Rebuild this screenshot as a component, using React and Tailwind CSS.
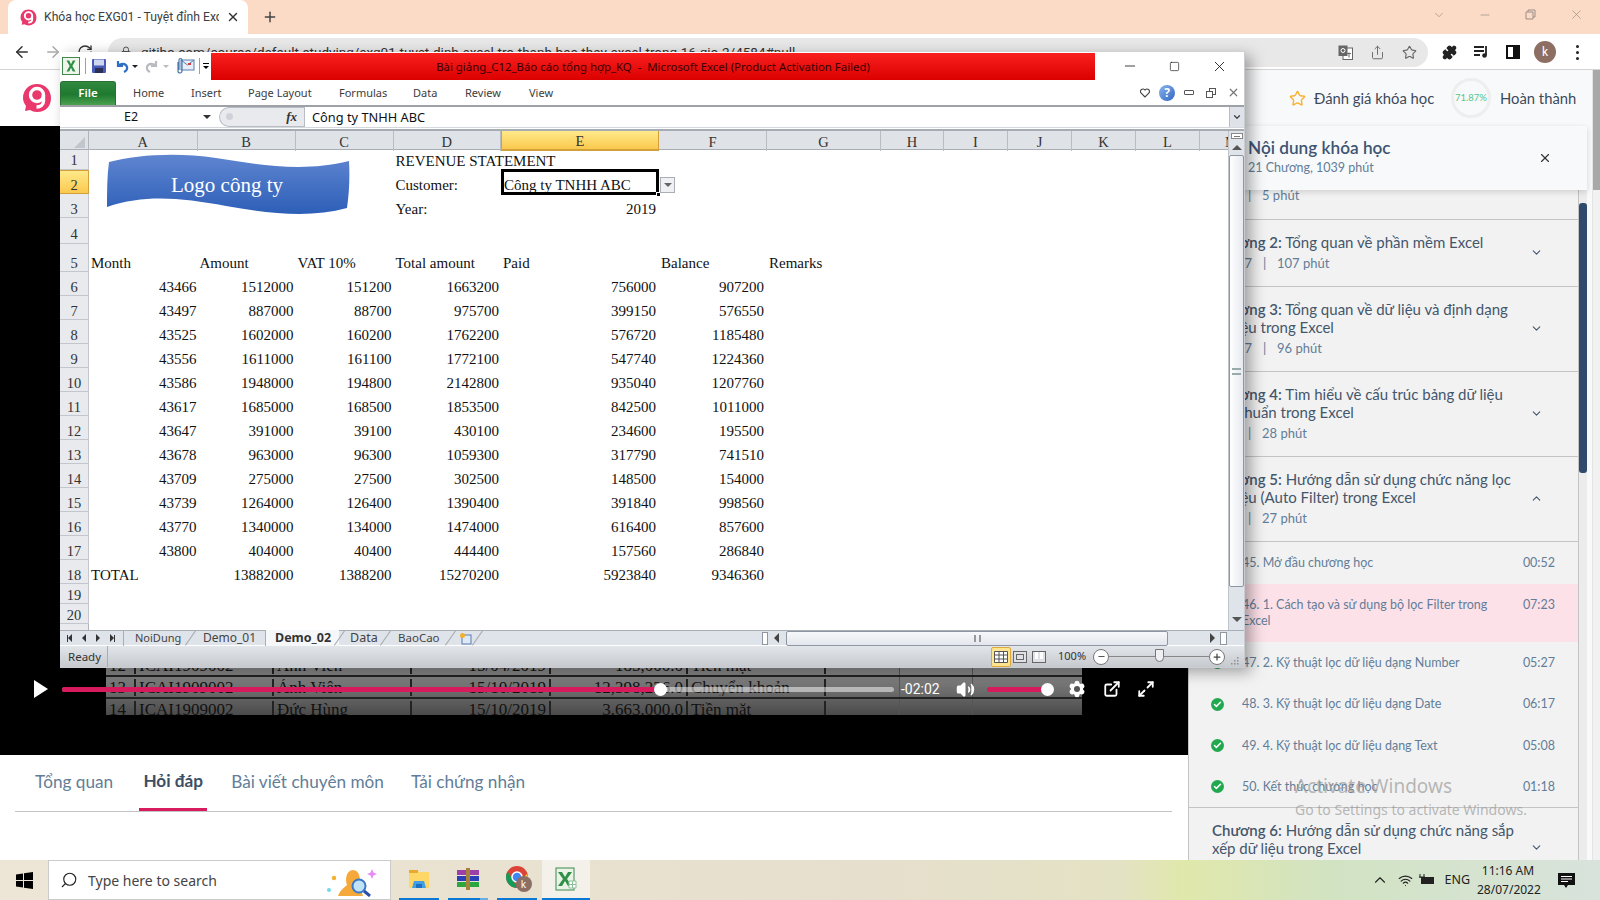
import React from "react";
import { ArrowLeft, ArrowRight, RotateCw, Lock, Share, Star, X, Plus, Minus, Square, ChevronDown, ChevronUp, Volume2, ExternalLink, Maximize2, Search, Wifi, Puzzle, Check, Settings } from "lucide-react";

const COLS = "grid grid-cols-[29px_108.5px_98px_98px_107.5px_158px_108px_114px_63px_64px_64px_64px_64px_64px]";
const ROWH = ["h-[20px] [&>*]:pb-[1.5px]","h-[24px] [&>*]:pb-[1px]","h-[24px] [&>*]:pb-[1px]","h-[26px] [&>*]:pb-[2px]","h-[28px] [&>*]:pb-[1px]","h-[24px] [&>*]:pb-[1px]","h-[24px] [&>*]:pb-[1px]","h-[24px] [&>*]:pb-[1px]","h-[24px] [&>*]:pb-[1px]","h-[24px] [&>*]:pb-[1px]","h-[24px] [&>*]:pb-[1px]","h-[24px] [&>*]:pb-[1px]","h-[24px] [&>*]:pb-[1px]","h-[24px] [&>*]:pb-[1px]","h-[24px] [&>*]:pb-[1px]","h-[24px] [&>*]:pb-[1px]","h-[24px] [&>*]:pb-[1px]","h-[24px] [&>*]:pb-[1px]","h-[20px] [&>*]:pb-[0.5px]","h-[20px] [&>*]:pb-[0.5px]"];
const LETTERS = ["A","B","C","D","E","F","G","H","I","J","K","L","M"];
const DATA = [
  [43466,1512000,151200,1663200,756000,907200],[43497,887000,88700,975700,399150,576550],[43525,1602000,160200,1762200,576720,1185480],
  [43556,1611000,161100,1772100,547740,1224360],[43586,1948000,194800,2142800,935040,1207760],[43617,1685000,168500,1853500,842500,1011000],
  [43647,391000,39100,430100,234600,195500],[43678,963000,96300,1059300,317790,741510],[43709,275000,27500,302500,148500,154000],
  [43739,1264000,126400,1390400,391840,998560],[43770,1340000,134000,1474000,616400,857600],[43800,404000,40400,444400,157560,286840],
];
const L = ({ children }) => <div className="pl-[2px] whitespace-nowrap">{children}</div>;
const R = ({ children }) => <div className="pr-[3px] text-right whitespace-nowrap">{children}</div>;
const R2 = ({ children }) => <div className="pr-[2px] text-right whitespace-nowrap">{children}</div>;
const R1 = ({ children }) => <div className="pr-[1px] text-right whitespace-nowrap">{children}</div>;

function rowCells(i) {
  if (i === 0) return [<div key="a" />, <div key="b" />, <div key="c" />, <L key="d">REVENUE STATEMENT</L>];
  if (i === 1) return [<div key="a" />, <div key="b" />, <div key="c" />, <L key="d">Customer:</L>,
    <div key="e" className="pl-[3px] whitespace-nowrap">Công ty TNHH ABC</div>];
  if (i === 2) return [<div key="a" />, <div key="b" />, <div key="c" />, <L key="d">Year:</L>, <R key="e">2019</R>];
  if (i === 4) return ["Month","Amount","VAT 10%","Total amount","Paid","Balance","Remarks"].map((t) => <L key={t}>{t}</L>);
  if (i >= 5 && i <= 16) {
    const d = DATA[i - 5];
    return [<R1 key="a">{d[0]}</R1>, <R2 key="b">{d[1]}</R2>, <R2 key="c">{d[2]}</R2>, <R2 key="d">{d[3]}</R2>, <R key="e">{d[4]}</R>, <R key="f">{d[5]}</R>];
  }
  if (i === 17) return [<L key="a">TOTAL</L>, <R2 key="b">13882000</R2>, <R2 key="c">1388200</R2>, <R2 key="d">15270200</R2>, <R key="e">5923840</R>, <R key="f">9346360</R>];
  return [];
}

function GLogo({ size = 30 }) {
  return (
    <svg width={size} height={size} viewBox="0 0 30 30">
      <path d="M15 1c8 0 14 6 14 14s-5 14-14 14c-3 0-5-1-7-2l-5 1 1-5C2 20 1 18 1 15 1 7 7 1 15 1z" fill="#e8386c" />
      <circle cx="15" cy="12" r="6.500" fill="none" stroke="#fff" strokeWidth="3.400" />
      <path d="M21.500 12v6c0 4-3 6-7 6" fill="none" stroke="#fff" strokeWidth="3.400" />
    </svg>
  );
}

function XlIcon({ size = 20 }) {
  return (
    <svg width={size} height={size} viewBox="0 0 20 20">
      <rect x="0.500" y="0.500" width="19" height="19" fill="#eef5ea" stroke="#2f7d3f" />
      <path d="M5 4h3l2 4 2-4h3l-3.500 6L15 16h-3l-2-4-2 4H5l3.500-6z" fill="#2f8f46" />
    </svg>
  );
}

const Slant = () => <div className="w-px h-[18px] bg-[#a9aeb5] rotate-[35deg] shrink-0" />;

function ExcelWindow() {
  return (
    <div className="absolute z-30 left-[60px] top-[52px] w-[1185px] h-[616px] flex flex-col bg-white shadow-[6px_4px_14px_rgba(0,0,0,0.35)] border-b border-r border-[#c9ccd2] font-['Noto_Sans',sans-serif]">
      <div className="h-[28px] flex shrink-0">
        <div className="w-[151px] flex items-center pl-[2px]">
          <XlIcon size={18} />
          <div className="w-px h-[16px] bg-[#9aa0a8] ml-[5px]" />
          <svg className="ml-[5px]" width="16" height="16" viewBox="0 0 16 16"><rect x="1" y="1" width="14" height="14" rx="1" fill="#4a5bb5" /><rect x="3" y="1.500" width="10" height="6" fill="#cfd6f0" /><rect x="4" y="10" width="8" height="5" fill="#2a2f55" /></svg>
          <svg className="ml-[8px]" width="14" height="14" viewBox="0 0 14 14"><path d="M3 2v5h5" fill="none" stroke="#2f6fc4" strokeWidth="2.200" /><path d="M3 7c2-3 8-3 9 1 .5 2-1 4-3 5" fill="none" stroke="#2f6fc4" strokeWidth="2.200" /></svg>
          <div className="ml-[3px] w-0 h-0 border-x-[3px] border-x-transparent border-t-[3px] border-t-[#222]" />
          <svg className="ml-[7px]" width="14" height="14" viewBox="0 0 14 14"><path d="M11 2v5H6" fill="none" stroke="#b8bcc2" strokeWidth="2.200" /><path d="M11 7C9 4 3 4 2 8c-.5 2 1 4 3 5" fill="none" stroke="#b8bcc2" strokeWidth="2.200" /></svg>
          <div className="ml-[4px] w-0 h-0 border-x-[3px] border-x-transparent border-t-[3px] border-t-[#b8bcc2]" />
          <svg className="ml-[6px]" width="20" height="18" viewBox="0 0 20 18"><rect x="6" y="3" width="13" height="10" fill="#e8eef7" stroke="#5a7fb0" /><path d="M6 3l6.500 5L19 3" fill="none" stroke="#5a7fb0" /><rect x="13" y="6" width="3" height="2" fill="#d04040" /><path d="M3 5v9a2 2 0 004 0V3a1.500 1.500 0 00-3 0v10" fill="none" stroke="#4a77a8" strokeWidth="1.200" /></svg>
          <div className="w-px h-[16px] bg-[#9aa0a8] ml-[4px]" />
          <div className="ml-[3px] flex flex-col items-center gap-[2px]"><div className="w-[6px] h-px bg-black" /><div className="w-0 h-0 border-x-[3px] border-x-transparent border-t-[3px] border-t-black" /></div>
        </div>
        <div className="w-[884px] mt-px h-[27px] bg-[linear-gradient(#f8201f,#dc0000)] flex items-center justify-center text-[11.400px] text-[#300] whitespace-pre">Bài giảng_C12_Báo cáo tổng hợp_KQ  -  Microsoft Excel (Product Activation Failed)</div>
        <div className="flex-1 flex items-center text-[#111]">
          <Minus size={16} strokeWidth={1.200} className="ml-[27px]" />
          <Square size={11} strokeWidth={1.400} className="ml-[31px]" />
          <X size={17} strokeWidth={1.200} className="ml-[31px]" />
        </div>
      </div>
      <div className="h-[25px] flex items-center shrink-0 text-[11px] text-[#3c3c3c]">
        <div className="w-[56px] h-[24px] rounded-t-[3px] bg-[linear-gradient(#2f8a3e,#1f7a30_55%,#4aa24f)] text-white text-[11.500px] font-semibold flex items-center justify-center border border-[#2c6e36] border-b-0">File</div>
        <div className="w-[17px]" />
        <div className="w-[58px] pt-px">Home</div>
        <div className="w-[57px] pt-px">Insert</div>
        <div className="w-[91px] pt-px">Page Layout</div>
        <div className="w-[74px] pt-px">Formulas</div>
        <div className="w-[52px] pt-px">Data</div>
        <div className="w-[64px] pt-px">Review</div>
        <div className="w-[611px] pt-px">View</div>
        <svg width="10" height="10" viewBox="0 0 10 10"><path d="M5 9L1 5a2.300 2.300 0 014-3 2.300 2.300 0 014 3z" fill="none" stroke="#444" strokeWidth="1.100" /></svg>
        <div className="ml-[9px] w-[16px] h-[16px] rounded-full bg-[linear-gradient(135deg,#8cb4ee,#2f66c0)] text-white font-bold text-[12px] flex items-center justify-center">?</div>
        <div className="ml-[9px] w-[10px] h-[5px] border border-[#555] rounded-[1px]" />
        <svg className="ml-[11px]" width="12" height="12" viewBox="0 0 12 12"><rect x="4.500" y="1.500" width="6" height="6" fill="#fff" stroke="#555" /><rect x="1.500" y="4.500" width="6" height="6" fill="#fff" stroke="#555" /></svg>
        <X size={13} strokeWidth={2.200} className="ml-[10px] text-[#777]" />
      </div>
      <div className="h-[22px] shrink-0 border-t-2 border-[#9ea2a8] flex bg-white items-stretch">
        <div className="w-[155px] relative flex items-center text-[12.500px] text-[#111] pl-[64px] pt-px">E2
          <div className="absolute left-[143px] top-[8px] w-0 h-0 border-x-[4px] border-x-transparent border-t-[4px] border-t-[#333]" />
        </div>
        <div className="w-[85px] bg-[#e8eaee] rounded-l-[12px] border border-[#b8bcc4] border-r-0 relative flex items-center justify-end pr-[7px] ml-[4px]">
          <div className="absolute left-[6px] top-[5px] w-[7px] h-[7px] rounded-full bg-[#cfd2d8]" />
          <span className="font-['Liberation_Serif',serif] italic font-bold text-[13px] text-[#333]">fx</span>
        </div>
        <div className="flex-1 border-l border-[#b8bcc4] flex items-center pl-[7px] pt-px text-[12.800px] text-[#111]">Công ty TNHH ABC</div>
        <div className="w-[15px] bg-[#dfe2e8] flex items-center justify-center border-l border-[#b8bcc4]"><ChevronDown size={10} strokeWidth={3} className="text-[#444]" /></div>
      </div>
      <div className="h-[4px] shrink-0 bg-white border-t border-[#d5d8dc] border-b-2 border-b-[#a7abb2]" />
      <div className="flex-1 flex min-h-0">
        <div className="w-[1169px] overflow-hidden font-['Liberation_Serif',serif] text-[15px] leading-none text-[#111] relative">
          <div className={COLS + " h-[19px] bg-[#dfe2e7] border-b border-[#a9aeb5] text-[14.500px] text-[#333]"}>
            <div className="border-r border-[#b0b5bc] flex items-end justify-end pr-[3px] pb-[3px]"><div className="w-0 h-0 border-l-[11px] border-l-transparent border-b-[11px] border-b-[#c2c6cc]" /></div>
            {LETTERS.map((c) => (
              <div key={c} className={c === "E" ? "bg-[linear-gradient(#fee98a,#fbc94f)] border-x border-[#d2a13a] border-b-2 flex items-center justify-center pt-[3px] text-[#333]" : "border-r border-[#b8bcc3] flex items-center justify-center pt-[3px]"}>{c}</div>
            ))}
          </div>
          {ROWH.map((h, i) => (
            <div key={i} className={COLS + " items-end " + h}>
              <div className={(i === 1 ? "bg-[linear-gradient(#fee98a,#fbc94f)] border-y border-[#d2a13a] " : "bg-[#e8eaee] border-b border-[#c3c7cd] ") + "h-full border-r border-[#b0b5bc] flex items-end justify-center text-[14.500px] text-[#333]"}>{i + 1}</div>
              {rowCells(i)}
            </div>
          ))}
          <div className="w-[29px] h-[7px] bg-[#e8eaee] border-r border-[#b0b5bc]" />
          <svg className="absolute left-[46px] top-[23px]" width="246" height="62" viewBox="0 0 246 62">
            <defs><linearGradient id="lg" x1="0" y1="0" x2="0" y2="1"><stop offset="0" stopColor="#5f85d0" /><stop offset="1" stopColor="#2d5fb8" /></linearGradient></defs>
            <path d="M3 8C30 1 70-2 110 4s85 15 133 3C244 25 243 40 241 54 205 64 165 60 120 52S40 40 1 53C1 38 1 22 3 8z" fill="url(#lg)" />
          </svg>
          <div className="absolute left-[111px] top-[44px] text-[21px] text-white whitespace-nowrap">Logo công ty</div>
          <div className="absolute left-[441px] top-[38px] w-[158px] h-[26px] border-[3px] border-black" />
          <div className="absolute left-[596px] top-[61px] w-[5px] h-[5px] bg-black border border-white" />
          <div className="absolute left-[600px] top-[46px] w-[15px] h-[16px] bg-[#eef0f3] border border-[#a9aeb5] flex items-center justify-center"><div className="w-0 h-0 border-x-[4px] border-x-transparent border-t-[4px] border-t-[#666]" /></div>
        </div>
        <div className="flex-1 bg-[#dfe3ea] border-l border-[#c0c4cb] flex flex-col items-center">
          <div className="w-[12px] h-[6px] mt-[2px] bg-white border border-[#888] flex items-center justify-center"><div className="w-[6px] h-px bg-[#777]" /></div>
          <div className="mt-[6px] w-0 h-0 border-x-[5px] border-x-transparent border-b-[5px] border-b-[#555]" />
          <div className="mt-[5px] w-[15px] h-[432px] bg-[linear-gradient(90deg,#fff,#e6e9ef)] border border-[#8e96a2] rounded-[2px] flex items-center justify-center"><div className="w-[9px] h-[7px] border-y-2 border-[#9aa]" /></div>
          <div className="mt-[30px] w-0 h-0 border-x-[5px] border-x-transparent border-t-[5px] border-t-[#555]" />
        </div>
      </div>
      <div className="h-[15px] shrink-0 bg-[#dfe3ea] border-t border-[#a9aeb5] flex items-center text-[12px] text-[#444] relative">
        <div className="w-[63px] flex items-center justify-around pl-[2px] pr-[3px]">
          <div className="flex items-center"><div className="w-px h-[7px] bg-[#333]" /><div className="w-0 h-0 border-y-[4px] border-y-transparent border-r-[4px] border-r-[#333]" /></div>
          <div className="w-0 h-0 border-y-[4px] border-y-transparent border-r-[4px] border-r-[#333]" />
          <div className="w-0 h-0 border-y-[4px] border-y-transparent border-l-[4px] border-l-[#333]" />
          <div className="flex items-center"><div className="w-0 h-0 border-y-[4px] border-y-transparent border-l-[4px] border-l-[#333]" /><div className="w-px h-[7px] bg-[#333]" /></div>
        </div>
        <div className="w-[67px] pl-[11px] border-l border-[#a9aeb5] text-[11px]">NoiDung</div>
        <Slant />
        <div className="w-[74px] pl-[12px]">Demo_01</div>
        <div className="w-[74px] h-[16px] pl-[9px] bg-[#f6f7f9] font-bold text-[#333] text-[12.500px] border-l border-[#a9aeb5] flex items-center">Demo_02</div>
        <Slant />
        <div className="w-[45px] pl-[10px] text-[12.500px]">Data</div>
        <Slant />
        <div className="w-[64px] pl-[12px] text-[11.500px]">BaoCao</div>
        <Slant />
        <div className="w-[26px] pl-[8px] flex items-center">
          <svg width="14" height="13" viewBox="0 0 14 13"><rect x="3" y="3" width="9" height="9" fill="#dfe8f5" stroke="#5a7fb0" /><circle cx="3.500" cy="3.500" r="2.500" fill="#f0b030" /></svg>
        </div>
        <Slant />
        <div className="w-[284px] h-full" />
        <div className="w-[6px] h-[13px] bg-white border border-[#8e96a2]" />
        <div className="ml-[6px] w-0 h-0 border-y-[5px] border-y-transparent border-r-[5px] border-r-[#444]" />
        <div className="ml-[7px] w-[382px] h-[15px] bg-[linear-gradient(#f7f8fa,#e3e6ec)] border border-[#8e96a2] rounded-[2px] flex items-center justify-center"><div className="w-[7px] h-[7px] border-x-2 border-[#999]" /></div>
        <div className="ml-[42px] w-0 h-0 border-y-[5px] border-y-transparent border-l-[5px] border-l-[#444]" />
        <div className="ml-[5px] w-[7px] h-[13px] bg-white border border-[#8e96a2]" />
      </div>
      <div className="h-[22px] shrink-0 bg-[linear-gradient(#e2e5e9,#c6cacf)] border-t border-white flex items-center text-[11.500px] text-[#333]">
        <div className="w-[48px] h-full pl-[8px] border-r border-[#a9aeb5] flex items-center">Ready</div>
        <div className="w-[883px]" />
        <div className="w-[20px] h-[20px] rounded-[2px] bg-[#fde58f] border border-[#e0a83a] flex items-center justify-center">
          <svg width="14" height="12" viewBox="0 0 14 12"><path d="M.5.5h13v11H.5zM.5 4h13M.5 8h13M5 .5v11M9.500.5v11" fill="#fff" stroke="#555" /></svg>
        </div>
        <div className="ml-[2px] w-[14px] h-[12px] bg-[#dfe1e4] border border-[#666] flex items-center justify-center"><div className="w-[8px] h-[6px] border border-[#666]" /></div>
        <div className="ml-[5px] w-[14px] h-[12px] bg-[#dfe1e4] border border-[#666] flex items-start justify-center gap-[2px]"><div className="w-[3px] h-[7px] bg-white" /><div className="w-[3px] h-[7px] bg-white" /></div>
        <div className="ml-[12px] w-[27px] text-[11px]">100%</div>
        <div className="ml-[8px] w-[16px] h-[16px] rounded-full bg-white border border-[#777] flex items-center justify-center"><Minus size={9} strokeWidth={3} className="text-[#555]" /></div>
        <div className="relative w-[100px] h-px bg-[#888]"><div className="absolute left-[46px] -top-[7px] w-[9px] h-[13px] bg-[#eef0f3] border border-[#777] rounded-b-[5px]" /></div>
        <div className="w-[16px] h-[16px] rounded-full bg-white border border-[#777] flex items-center justify-center"><Plus size={10} strokeWidth={3} className="text-[#444]" /></div>
        <svg className="ml-[4px] self-end mb-[1px]" width="10" height="10" viewBox="0 0 10 10"><path d="M8 1h1.500v1.500H8zM5 4h1.500v1.500H5zM8 4h1.500v1.500H8zM2 7h1.500v1.500H2zM5 7h1.500v1.500H5zM8 7h1.500v1.500H8z" fill="#8a8f96" /></svg>
      </div>
    </div>
  );
}

function Chrome() {
  return (
    <>
      <div className="h-[34px] bg-[#fbdac6] flex items-end pl-[8px] shrink-0 relative">
        <div className="w-[240px] h-[34px] bg-white rounded-t-[8px] flex items-center pl-[12px] pr-[7px]">
          <GLogo size={17} />
          <span className="ml-[7px] w-[175px] overflow-hidden whitespace-nowrap text-[12.200px] text-[#3c4043] font-['Roboto',sans-serif]">Khóa học EXG01 - Tuyệt đỉnh Excel</span>
          <X size={14} strokeWidth={2.400} className="ml-[7px] text-[#333]" />
        </div>
        <Plus size={16} strokeWidth={2.200} className="ml-[14px] mb-[9px] text-[#444]" />
        <div className="ml-auto flex items-center mb-[12px] text-[#9a8f88]">
          <ChevronDown size={14} strokeWidth={1.200} />
          <Minus size={14} strokeWidth={1.200} className="ml-[32px]" />
          <svg className="ml-[33px]" width="11" height="11" viewBox="0 0 11 11"><path d="M3 3V1h7v7H8M1 3h7v7H1z" fill="none" stroke="#9a8f88" /></svg>
          <X size={15} strokeWidth={1.100} className="ml-[33px] mr-[16px]" />
        </div>
      </div>
      <div className="h-[36px] bg-white border-b border-[#d4d4d4] flex items-center shrink-0 pt-[1px]">
        <ArrowLeft size={18} strokeWidth={2} className="ml-[13px] text-[#333]" />
        <ArrowRight size={18} strokeWidth={2} className="ml-[13px] text-[#aaa]" />
        <RotateCw size={16} strokeWidth={2} className="ml-[15px] text-[#333]" />
        <div className="ml-[15px] w-[1320px] h-[29px] rounded-full bg-[#e8e8e9] flex items-center pl-[12px] pr-[10px]">
          <Lock size={12} className="text-[#555]" />
          <span className="ml-[9px] text-[13.500px] text-[#333] font-['Roboto',sans-serif] whitespace-nowrap">gitiho.com/course/default-studying/exg01-tuyet-dinh-excel-tro-thanh-bac-thay-excel-trong-16-gio-2/4584#null</span>
          <div className="ml-auto flex items-center text-[#666]">
            <svg width="15" height="15" viewBox="0 0 15 15"><rect x="5" y="3" width="9.500" height="11.500" fill="#fff" stroke="#666" /><rect x="0.500" y="0.500" width="9" height="10.500" fill="#666" /><circle cx="5" cy="5.500" r="2" fill="none" stroke="#fff" /><path d="M9 8.500h4M11 7.500v5" stroke="#666" /></svg>
            <Share size={15} strokeWidth={1.500} className="ml-[17px]" />
            <Star size={15} strokeWidth={1.800} className="ml-[17px] mr-[1px]" />
          </div>
        </div>
        <Puzzle size={15} fill="#222" className="ml-[14px] text-[#222]" />
        <svg className="ml-[17px]" width="15" height="14" viewBox="0 0 15 14"><path d="M0 2h10M0 6h10M0 10h6" stroke="#222" strokeWidth="1.800" /><path d="M12 1v9" stroke="#222" strokeWidth="1.800" /><circle cx="10.500" cy="10.500" r="2.300" fill="#222" /></svg>
        <div className="ml-[17px] w-[14px] h-[14px] border-2 border-[#111] flex justify-end"><div className="w-[5px] bg-[#111]" /></div>
        <div className="ml-[14px] w-[22px] h-[22px] rounded-full bg-[#8d6e63] text-white text-[12px] flex items-center justify-center font-['Roboto',sans-serif]">k</div>
        <div className="ml-[20px] flex flex-col gap-[3px]"><div className="w-[3px] h-[3px] rounded-full bg-[#222]" /><div className="w-[3px] h-[3px] rounded-full bg-[#222]" /><div className="w-[3px] h-[3px] rounded-full bg-[#222]" /></div>
      </div>
    </>
  );
}

const TD = ({ children, right }) => <div className={(right ? "text-right pr-[3px] " : "pl-[3px] ") + "border-r-2 border-[#222] whitespace-nowrap overflow-hidden"}>{children}</div>;

function VideoRow({ r }) {
  return (
    <div className="h-[22px] grid grid-cols-[30px_138px_138px_139px_137px_138px_74px_73px_109px] border-b-2 border-[#222] items-center text-[17px] leading-none text-[#111]">
      <TD>{r[0]}</TD><TD>{r[1]}</TD><TD>{r[2]}</TD><TD right>{r[3]}</TD><TD right>{r[4]}</TD><TD>{r[5]}</TD>
      <div className="h-full border-r border-[#555]" /><div className="h-full border-r border-[#555]" /><div />
    </div>
  );
}

function Video() {
  return (
    <div className="h-[629px] bg-black flex flex-col justify-end relative shrink-0">
      <div className="ml-[106px] mb-[40px] w-[976px] h-[60px] overflow-hidden bg-[linear-gradient(#a0a0a0,#4a4a4a)] font-['Liberation_Serif',serif]">
        <VideoRow r={["12","ICAI1909002","Ánh Viên","15/04/2019","185,000.0","Tiền mặt"]} />
        <VideoRow r={["13","ICAI1909002","Ánh Viên","15/10/2019","12,398,236.0","Chuyển khoản"]} />
        <VideoRow r={["14","ICAI1909002","Đức Hùng","15/10/2019","3,663,000.0","Tiền mặt"]} />
      </div>
      <div className="absolute left-0 bottom-[54px] h-[24px] w-full flex items-center pl-[34px] text-white font-['Roboto',sans-serif]">
        <div className="w-0 h-0 border-y-[9px] border-y-transparent border-l-[14px] border-l-white" />
        <div className="ml-[14px] w-[832px] h-[5px] rounded-full bg-white/50 relative">
          <div className="w-[598px] h-full rounded-full bg-[#d81b5c]" />
          <div className="absolute left-[592px] -top-[4px] w-[13px] h-[13px] rounded-full bg-white" />
        </div>
        <span className="ml-[7px] w-[40px] text-[14px]">-02:02</span>
        <Volume2 size={19} fill="#fff" strokeWidth={2} className="ml-[15px]" />
        <div className="ml-[12px] w-[61px] h-[5px] rounded-full bg-[#d81b5c] relative"><div className="absolute -right-[6px] -top-[4px] w-[13px] h-[13px] rounded-full bg-white" /></div>
        <div className="ml-[20px] relative flex items-center justify-center">
          <Settings size={18} fill="#fff" stroke="#fff" />
          <div className="absolute w-[6px] h-[6px] rounded-full bg-[#555]" />
        </div>
        <ExternalLink size={18} strokeWidth={2.400} className="ml-[17px]" />
        <Maximize2 size={18} strokeWidth={2.400} className="ml-[16px]" />
      </div>
    </div>
  );
}

function Chapter({ no, title, second, sub, open, h, last }) {
  return (
    <div className={(last ? "flex items-start pt-[13px] " : "flex items-center pb-[2px] ") + "border-b border-[#c4c4c4] pl-[23px] pr-[35px] " + h}>
      <div className="w-[308px]">
        <div className="text-[15px] leading-[18px] text-[#44566c]"><b className="font-semibold">Chương {no}:</b> {title}{second && <br />}{second}</div>
        {sub && <div className="text-[13px] leading-[18px] text-[#627d98] mt-[3px] flex"><span className={sub[0] ? "w-[40px] text-right" : "w-[25px] text-right"}>{sub[0] || "7"}</span><span className="ml-[11px] w-[14px]">|</span><span>{sub[1]} phút</span></div>}
      </div>
      <div className={last ? "ml-auto mt-[20px]" : "ml-auto"}>{open ? <ChevronUp size={13} className="text-[#44566c]" /> : <ChevronDown size={13} className="text-[#44566c]" />}</div>
    </div>
  );
}

function Lesson({ t, d, pink, check, h }) {
  return (
    <div className={"flex pl-[22px] pr-[23px] text-[12.500px] leading-[16px] text-[#627d98] " + (pink ? "bg-[#fde1e8] h-[58px] pt-[13px] items-start" : "items-center " + h)}>
      <div className="w-[31px] shrink-0">{check && <div className="w-[13px] h-[13px] rounded-full bg-[#22a94f] flex items-center justify-center"><Check size={9} strokeWidth={4} className="text-white" /></div>}</div>
      <div className="w-[270px]">{t}</div>
      <div className="ml-auto text-[12.500px]">{d}</div>
    </div>
  );
}

function Sidebar() {
  return (
    <div className="w-[412px] flex flex-col shrink-0 bg-[#f8f9fa] font-['Lato',sans-serif] relative">
      <div className="h-[56px] flex items-center pl-[101px] text-[14.800px] text-[#3c4a5a]">
        <Star size={17} className="text-[#f9b233]" strokeWidth={2} />
        <span className="ml-[8px] w-[134px] whitespace-nowrap">Đánh giá khóa học</span>
        <div className="ml-[3px] w-[40px] h-[40px] rounded-full border-[3px] border-[#eeeeee] flex items-center justify-center text-[9.500px] text-[#56c58b] shrink-0">71.87%</div>
        <span className="ml-[9px] whitespace-nowrap">Hoàn thành</span>
      </div>
      <div className="h-[64px] w-[399px] bg-[#f8f9fa] shadow-[0_2px_6px_rgba(0,0,0,0.15)] z-10 flex items-center relative shrink-0">
        <div className="pl-[60px] pb-[2px]">
          <div className="text-[17.200px] leading-[22px] font-semibold text-[#3d5573]">Nội dung khóa học</div>
          <div className="text-[12.500px] leading-[18px] text-[#627d98]">21 Chương, 1039 phút</div>
        </div>
        <X size={14} strokeWidth={2} className="ml-auto mr-[35px] text-[#333]" />
      </div>
      <div className="flex-1 flex min-h-0 overflow-hidden">
        <div className="w-[391px] bg-[#f2f2f2] border-x border-[#c4c4c4]">
          <div className="h-[30px] flex items-start border-b border-[#c4c4c4] pl-[25px] text-[13px] leading-[10px] text-[#627d98]"><span className="w-[23px] text-right">1</span><span className="ml-[11px] w-[14px]">|</span><span>5 phút</span></div>
          <Chapter no="2" title="Tổng quan về phần mềm Excel" sub={["7","107"]} h="h-[67px]" />
          <Chapter no="3" title="Tổng quan về dữ liệu và định dạng dữ liệu trong Excel" sub={["7","96"]} h="h-[85px]" />
          <Chapter no="4" title="Tìm hiểu về cấu trúc bảng dữ liệu" second="đạt chuẩn trong Excel" sub={["","28"]} h="h-[85px]" />
          <Chapter no="5" title="Hướng dẫn sử dụng chức năng lọc dữ liệu (Auto Filter) trong Excel" sub={["","27"]} h="h-[85px]" open />
          <Lesson t="45. Mở đầu chương học" d="00:52" h="h-[42px]" />
          <Lesson t="46. 1. Cách tạo và sử dụng bộ lọc Filter trong Excel" d="07:23" pink />
          <Lesson t="47. 2. Kỹ thuật lọc dữ liệu dạng Number" d="05:27" check h="h-[41px]" />
          <Lesson t="48. 3. Kỹ thuật lọc dữ liệu dạng Date" d="06:17" check h="h-[42px]" />
          <Lesson t="49. 4. Kỹ thuật lọc dữ liệu dạng Text" d="05:08" check h="h-[41px]" />
          <Lesson t="50. Kết thúc chương học" d="01:18" check h="h-[41px]" />
          <div className="border-t border-[#c4c4c4]">
            <Chapter no="6" title="Hướng dẫn sử dụng chức năng sắp xếp dữ liệu trong Excel" h="h-[70px]" last />
          </div>
        </div>
        <div className="w-[8px] bg-[#ececec] relative"><div className="absolute top-[13px] w-[8px] h-[270px] bg-[#2f4a6d] rounded-[3px]" /></div>
        <div className="flex-1 bg-[#f8f9fa]" />
      </div>
      <div className="absolute top-0 right-0 w-[8px] h-full bg-[#f1f1f1] border-l border-[#e4e4e4] z-20"><div className="h-[120px] bg-[#a8a8a8]" /></div>
      <div className="absolute left-[107px] top-[704px] z-20 text-[19px] leading-[24px] text-[#9a9a9a]/70 font-['Noto_Sans',sans-serif] whitespace-nowrap pointer-events-none">Activate Windows</div>
      <div className="absolute left-[107px] top-[730px] z-20 text-[14px] leading-[20px] text-[#9a9a9a]/70 font-['Noto_Sans',sans-serif] whitespace-nowrap pointer-events-none">Go to Settings to activate Windows.</div>
    </div>
  );
}

function Taskbar() {
  const apps = [
    { k: "a", w: "w-[40px] mr-[9px]", icon: <svg width="22" height="22" viewBox="0 0 22 22"><path d="M1 2h8l2 2h10v16H1z" fill="#ffd767" /><rect x="1" y="2" width="9" height="3" fill="#e8a92c" /><path d="M6 13h10l2 7H4z" fill="#3f9fe8" /><rect x="8" y="16" width="6" height="4" fill="#1f6fc0" /></svg>, bar: "w-full bg-[#0a78d4]" },
    { k: "b", w: "w-[40px] mr-[9px]", icon: <svg width="24" height="22" viewBox="0 0 24 22"><rect x="1" y="2" width="22" height="5" fill="#9c3fa8" /><rect x="1" y="8" width="22" height="5" fill="#2a3fb8" /><rect x="1" y="14" width="22" height="5" fill="#2aa83f" /><rect x="10" y="0" width="4" height="22" fill="#a8823a" /></svg>, bar: "w-full bg-[linear-gradient(90deg,#0a78d4_80%,#6aaee8_80%)]" },
    { k: "c", w: "w-[40px] mr-[5px]", icon: <div className="relative w-[26px] h-[26px] ml-[3px]"><svg width="22" height="22" viewBox="0 0 22 22"><circle cx="11" cy="11" r="11" fill="#db4437" /><path d="M11 22A11 11 0 011.500 5.500L7 14l4 8z" fill="#0f9d58" /><path d="M22 11a11 11 0 01-11 11l5-9 5-5z" fill="#ffcd40" /><circle cx="11" cy="11" r="5" fill="#4285f4" stroke="#fff" strokeWidth="1.500" /></svg><div className="absolute right-0 bottom-0 w-[16px] h-[16px] rounded-full bg-[#8d6e63] text-white text-[10px] flex items-center justify-center">k</div></div>, bar: "w-full bg-[#0a78d4]" },
    { k: "d", w: "w-[48px] bg-[#f3f1ea]", icon: <svg width="24" height="24" viewBox="0 0 24 24"><rect x="2" y="1" width="18" height="22" fill="#e9f3e6" stroke="#3c8a50" /><path d="M4 5h4l3 5 3-5h4l-5 7 5 7h-4l-3-5-3 5H4l5-7z" fill="#2f8f46" /><path d="M15 14h7v7h-7zM15 17.500h7M18.500 14v7" fill="#fff" stroke="#8cc09a" /></svg>, bar: "w-full bg-[#0a78d4]" },
  ];
  return (
    <div className="h-[40px] shrink-0 flex items-stretch bg-[linear-gradient(90deg,#ede6d6_0%,#e6dfcd_55%,#e4e2c4_70%,#e0e8ab_74%,#d2e3c2_83%,#d8e3dc_100%)] font-['Noto_Sans',sans-serif]">
      <div className="w-[48px] flex items-center justify-center">
        <svg width="17" height="17" viewBox="0 0 17 17"><path d="M0 2.500l7-1v6.500H0zM8 1.300L17 0v8H8zM0 9h7v6.500l-7-1zM8 9h9v8l-9-1.300z" fill="#000" /></svg>
      </div>
      <div className="w-[343px] bg-white border border-[#cbcbcb] flex items-center pl-[11px] relative">
        <Search size={18} strokeWidth={1.500} className="text-[#222] -scale-x-100" />
        <span className="ml-[10px] text-[14px] text-[#444]">Type here to search</span>
        <svg className="ml-auto mr-[10px]" width="54" height="34" viewBox="0 0 54 34">
          <path d="M12 33c2-6 7-9 9-11-2-5-1-15 6-15s8 10 6 15l4 11z" fill="#f5a93b" />
          <circle cx="33" cy="23" r="6.500" fill="#bfe3f5" stroke="#3a78c8" strokeWidth="2" />
          <path d="M38 28l6 5" stroke="#2f4fa8" strokeWidth="3" />
          <path d="M46 6l1.500 3.500L51 11l-3.500 1.500L46 16l-1.500-3.500L41 11l3.500-1.500z" fill="#e88cf5" />
          <circle cx="8" cy="15" r="2.200" fill="#f5b030" /><circle cx="3" cy="27" r="2" fill="#72d8ea" />
        </svg>
      </div>
      <div className="w-[8px]" />
      {apps.map((a) => (
        <div key={a.k} className={a.w + " flex flex-col items-center relative"}>
          <div className="flex-1 flex items-center justify-center">{a.icon}</div>
          <div className={"h-[2px] " + a.bar} />
        </div>
      ))}
      <div className="ml-auto flex items-center text-[#222] pr-[25px]">
        <ChevronUp size={18} strokeWidth={1.500} />
        <Wifi size={15} strokeWidth={1.800} className="ml-[9px]" />
        <svg className="ml-[6px]" width="16" height="12" viewBox="0 0 16 12"><rect x="2" y="3" width="13" height="7" fill="#222" /><path d="M1 0v4M5 0v4M0 3h6" stroke="#222" /></svg>
        <span className="ml-[9px] text-[12.500px]">ENG</span>
        <div className="ml-[7px] w-[62px] text-center text-[12px] leading-[19px] whitespace-nowrap"><div>11:16 AM</div><div>28/07/2022</div></div>
        <svg className="ml-[19px]" width="17" height="17" viewBox="0 0 17 17"><path d="M0 1h17v12H10l-2 3-2-3H0z" fill="#111" /><path d="M3 4.500h11M3 7h11M3 9.500h7" stroke="#fff" /></svg>
      </div>
    </div>
  );
}

export default function App() {
  return (
    <div className="relative w-[1600px] h-[900px] overflow-hidden bg-white flex flex-col">
      <Chrome />
      <div className="flex-1 flex min-h-0">
        <div className="w-[1188px] flex flex-col shrink-0 font-['Lato',sans-serif]">
          <div className="h-[56px] bg-white pl-[22px] flex items-center shrink-0"><GLogo size={30} /></div>
          <Video />
          <div className="mx-[15px] w-[1157px] h-[57px] border-b border-[#c4c4c4] flex items-stretch text-[17.200px] text-[#627d98]">
            <div className="ml-[20px] pb-[2px] flex items-center whitespace-nowrap">Tổng quan</div>
            <div className="ml-[26px] w-[68px] flex items-center justify-center font-bold text-[#3d4f66] border-b-[3px] border-[#d81b5c] pb-[1px] whitespace-nowrap">Hỏi đáp</div>
            <div className="ml-[24px] pb-[2px] flex items-center whitespace-nowrap">Bài viết chuyên môn</div>
            <div className="ml-[27px] pb-[2px] flex items-center whitespace-nowrap">Tải chứng nhận</div>
          </div>
        </div>
        <Sidebar />
      </div>
      <Taskbar />
      <ExcelWindow />
    </div>
  );
}
